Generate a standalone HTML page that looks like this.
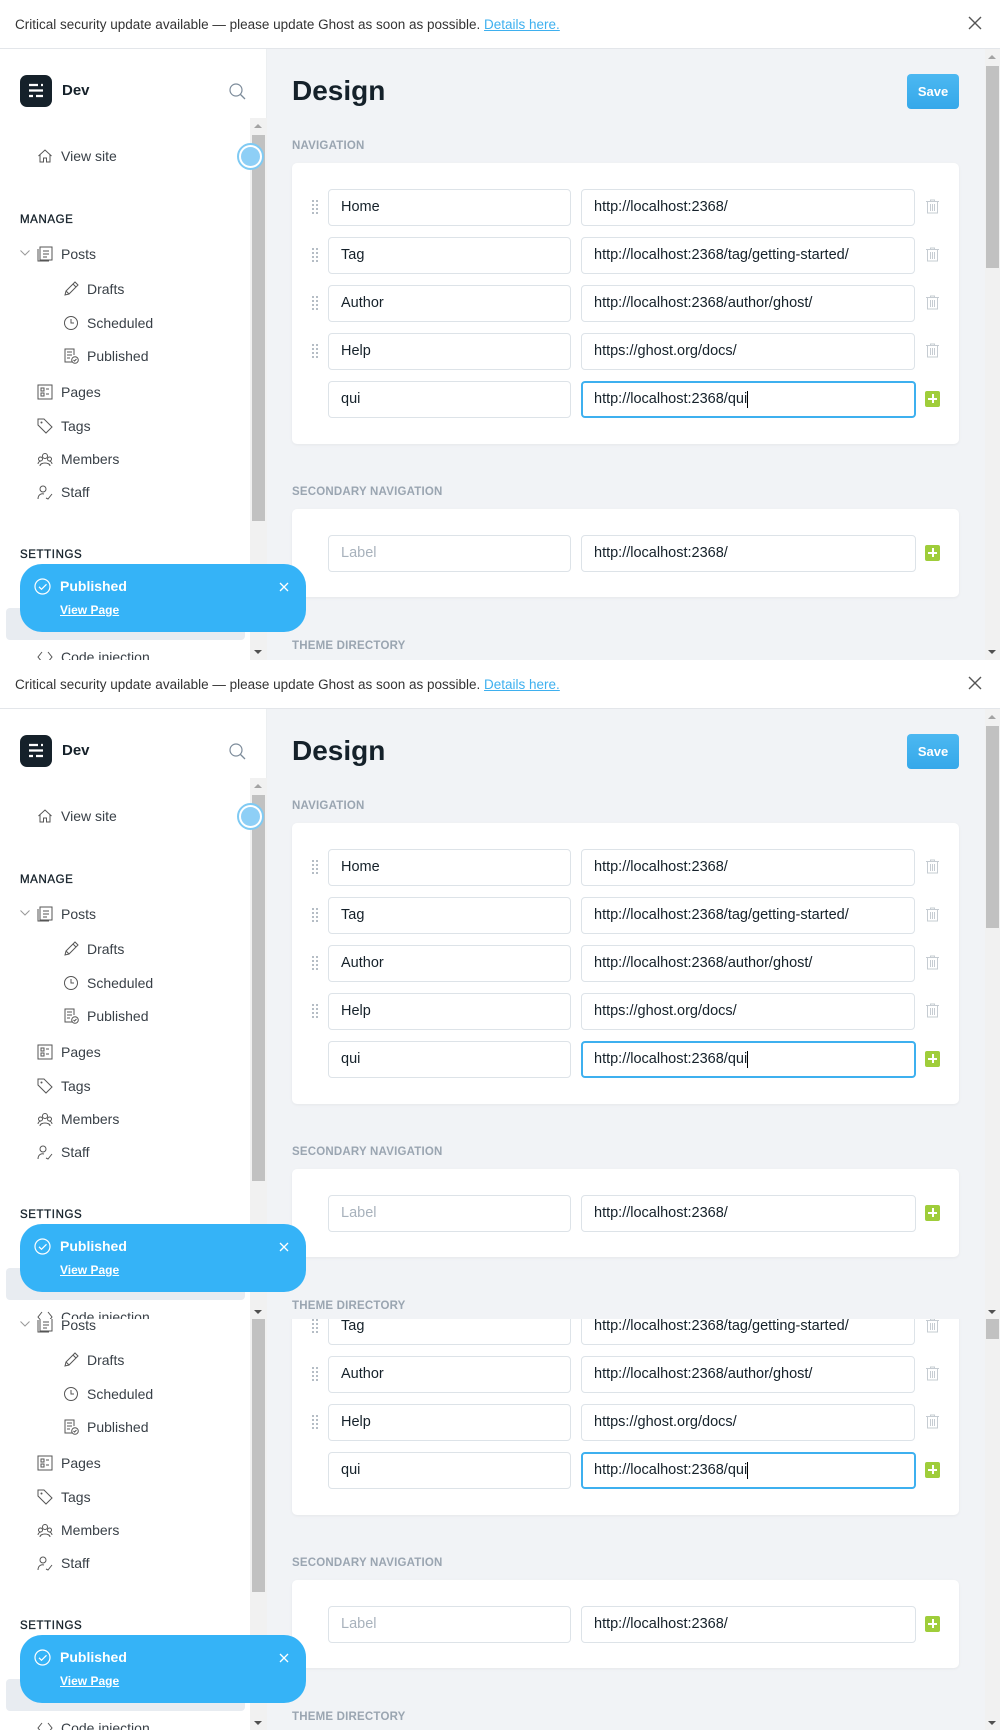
<!DOCTYPE html>
<html><head><meta charset="utf-8">
<style>
*{box-sizing:border-box;margin:0;padding:0}
body{width:1000px;height:1730px;position:relative;overflow:hidden;background:#fff;font-family:"Liberation Sans",sans-serif;color:#15212a}
.blk{position:absolute;left:0;width:1000px;height:660px;overflow:hidden;background:#fff}
.a{position:absolute}
.banner{left:0;top:0;width:1000px;height:49px;border-bottom:1px solid #e3e6ea;background:#fff;font-size:13.5px;color:#333;line-height:49px;padding-left:15px}
.banner a{color:#3eb0ef;text-decoration:underline}
.side{left:0;top:49px;width:267px;height:611px;background:#fff;border-right:1px solid #eceff1}
.main{left:267px;top:49px;width:733px;height:611px;background:#f1f3f6}
.ni{position:absolute;font-size:14px;color:#394047;line-height:20px}
.ni svg{position:absolute;top:2px}
.lbl{position:absolute;font-size:11.5px;font-weight:normal;letter-spacing:.6px;color:#15212a;-webkit-text-stroke:.3px #15212a}
.sec{position:absolute;left:292px;font-size:11.5px;font-weight:bold;color:#9aa5b1;letter-spacing:.2px}
.card{position:absolute;left:292px;width:667px;background:#fff;border-radius:5px;box-shadow:0 1px 3px rgba(0,0,0,.05)}
.in{position:absolute;height:37px;border:1px solid #dde3e8;border-radius:4px;background:#fff;font-size:14.5px;line-height:35px;padding-left:12px;color:#15212a;white-space:nowrap}
.drag{position:absolute;left:311px;width:8px;height:16px}
.trash{position:absolute;left:926px}
.plus{position:absolute;left:925px;width:15px;height:16px;background:#9fcd3a;border-radius:2px}
.plus:before{content:"";position:absolute;left:3px;top:7px;width:9px;height:1.5px;background:#fff}
.plus:after{content:"";position:absolute;left:7px;top:3px;width:1.5px;height:9px;background:#fff}
</style></head><body>

<template id="t">
<div class="a banner">Critical security update available — please update Ghost as soon as possible. <a>Details here.</a></div>
<svg class="a" style="left:968px;top:16px" width="14" height="14" viewBox="0 0 14 14"><path d="M1 1L13 13M13 1L1 13" stroke="#555" stroke-width="1.4"/></svg>
<div class="a side">
 <div class="a" style="left:20px;top:26px;width:32px;height:32px;background:#15212a;border-radius:7px">
  <svg width="32" height="32" viewBox="0 0 32 32"><path d="M9 10h9M21 10h2M9 15.5h14M9 21h4M16 21h7" stroke="#fff" stroke-width="2.2"/></svg></div>
 <div class="a" style="left:62px;top:33px;font-size:15px;font-weight:bold">Dev</div>
 <svg class="a" style="left:229px;top:34px" width="17" height="17" viewBox="0 0 17 17"><circle cx="7" cy="7" r="6" fill="none" stroke="#7c8b9a" stroke-width="1.2"/><path d="M11.5 11.5L16 16" stroke="#7c8b9a" stroke-width="1.3"/></svg>
 <div class="a" style="left:250px;top:69px;width:17px;height:542px;background:#f1f1f1"></div>
 <div class="a" style="left:252px;top:86px;width:13px;height:386px;background:#c1c1c1"></div>
 <div class="a" style="left:254px;top:75px;border:4px solid transparent;border-bottom:4px solid #a3a3a3;border-top:0"></div>
 <div class="a" style="left:254px;top:601px;border:4px solid transparent;border-top:4px solid #505050;border-bottom:0"></div>
 <div class="a" style="left:237px;top:94px;width:27px;height:27px;border-radius:50%;border:2px solid #7fcaf3;background:#fff"></div>
 <div class="a" style="left:241px;top:98px;width:19px;height:19px;border-radius:50%;background:#8ecff6"></div>
 <div class="ni" style="left:37px;top:97px"><svg width="16" height="16" viewBox="0 0 16 16" style="left:0"><path d="M1.5 8L8 2l6.5 6M3 7v7h3.5v-4h3v4H13V7" fill="none" stroke="#555" stroke-width="1"/></svg><span style="margin-left:24px">View site</span></div>
 <div class="lbl" style="left:20px;top:165px">MANAGE</div>
 <svg class="a" style="left:20px;top:201px" width="10" height="6"><path d="M.5.5L5 5 9.5.5" fill="none" stroke="#999"/></svg>
 <div class="ni" style="left:37px;top:195px"><svg width="16" height="16" viewBox="0 0 16 16" style="left:0"><rect x="3" y="1" width="12" height="13" fill="none" stroke="#555"/><path d="M1 3v12h11M6 5h6M6 8h6M6 11h4" fill="none" stroke="#555"/></svg><span style="margin-left:24px">Posts</span></div>
 <div class="ni" style="left:63px;top:230px"><svg width="16" height="16" viewBox="0 0 16 16" style="left:0"><path d="M2 14l1-4 9-9 3 3-9 9zM3 10l3 3M10 3l3 3" fill="none" stroke="#555"/></svg><span style="margin-left:24px">Drafts</span></div>
 <div class="ni" style="left:63px;top:264px"><svg width="16" height="16" viewBox="0 0 16 16" style="left:0"><circle cx="8" cy="8" r="6.5" fill="none" stroke="#555"/><path d="M8 4v4h3" fill="none" stroke="#555"/></svg><span style="margin-left:24px">Scheduled</span></div>
 <div class="ni" style="left:63px;top:297px"><svg width="16" height="16" viewBox="0 0 16 16" style="left:0"><path d="M9 14H2V1h9v6M4 4h5M4 7h5M4 10h3" fill="none" stroke="#555"/><circle cx="12" cy="12" r="3.3" fill="none" stroke="#555"/><path d="M10.5 12l1 1 2-2" fill="none" stroke="#555"/></svg><span style="margin-left:24px">Published</span></div>
 <div class="ni" style="left:37px;top:333px"><svg width="16" height="16" viewBox="0 0 16 16" style="left:0"><rect x="1" y="1" width="14" height="14" fill="none" stroke="#555"/><path d="M4 4h3v3H4zM4 9h3v3H4zM9 5h3M9 10h3" fill="none" stroke="#555"/></svg><span style="margin-left:24px">Pages</span></div>
 <div class="ni" style="left:37px;top:367px"><svg width="16" height="16" viewBox="0 0 16 16" style="left:0"><path d="M1 1h6l8 8-6 6-8-8z" fill="none" stroke="#555"/><circle cx="4.5" cy="4.5" r="1" fill="#555"/></svg><span style="margin-left:24px">Tags</span></div>
 <div class="ni" style="left:37px;top:400px"><svg width="16" height="16" viewBox="0 0 16 16" style="left:0"><circle cx="8" cy="5" r="2.5" fill="none" stroke="#555"/><circle cx="3.5" cy="8" r="2" fill="none" stroke="#555"/><circle cx="12.5" cy="8" r="2" fill="none" stroke="#555"/><path d="M3 15c0-4 10-4 10 0M1 13c0-2 2-3 3-3M15 13c0-2-2-3-3-3" fill="none" stroke="#555"/></svg><span style="margin-left:24px">Members</span></div>
 <div class="ni" style="left:37px;top:433px"><svg width="16" height="16" viewBox="0 0 16 16" style="left:0"><circle cx="6" cy="5" r="3" fill="none" stroke="#555"/><path d="M1 15c0-4 3-6 6-5M9 14l2 1 4-5" fill="none" stroke="#555"/></svg><span style="margin-left:24px">Staff</span></div>
 <div class="lbl" style="left:20px;top:500px">SETTINGS</div>
 <div class="a" style="left:6px;top:559px;width:239px;height:32px;background:#e8ecf1;border-radius:4px"></div>
 <div class="ni" style="left:37px;top:598px"><svg width="16" height="16" viewBox="0 0 16 16" style="left:0"><path d="M5 3L1 8l4 5M11 3l4 5-4 5" fill="none" stroke="#555"/></svg><span style="margin-left:24px">Code injection</span></div>
</div>
<div class="a main">
 <div class="a" style="left:718px;top:0;width:15px;height:611px;background:#f1f1f1"></div>
 <div class="a" style="left:719px;top:17px;width:13px;height:202px;background:#c1c1c1"></div>
 <div class="a" style="left:721px;top:6px;border:4px solid transparent;border-bottom:4px solid #a3a3a3;border-top:0"></div>
 <div class="a" style="left:721px;top:601px;border:4px solid transparent;border-top:4px solid #505050;border-bottom:0"></div>
</div>
<div class="a" style="left:292px;top:74px;font-size:28px;font-weight:bold;color:#15212a;line-height:34px">Design</div>
<div class="a" style="left:907px;top:74px;width:52px;height:35px;border-radius:4px;background:linear-gradient(#4cb8f1,#35a8ea);color:#fff;font-size:13px;font-weight:bold;text-align:center;line-height:35px">Save</div>
<div class="sec" style="top:140px">NAVIGATION</div>
<div class="card" style="top:163px;height:281px"></div>
<div class="in" style="left:328px;top:189px;width:243px">Home</div><div class="in" style="left:581px;top:189px;width:334px">http://localhost:2368/</div>
<div class="in" style="left:328px;top:237px;width:243px">Tag</div><div class="in" style="left:581px;top:237px;width:334px">http://localhost:2368/tag/getting-started/</div>
<div class="in" style="left:328px;top:285px;width:243px">Author</div><div class="in" style="left:581px;top:285px;width:334px">http://localhost:2368/author/ghost/</div>
<div class="in" style="left:328px;top:333px;width:243px">Help</div><div class="in" style="left:581px;top:333px;width:334px">https://ghost.org/docs/</div>
<div class="in" style="left:328px;top:381px;width:243px">qui</div><div class="in" style="left:581px;top:381px;width:335px;border:2px solid #3eb0ef;line-height:33px;padding-left:11px">http://localhost:2368/qui<span style="display:inline-block;width:1px;height:17px;background:#000;vertical-align:middle"></span></div>
<div class="plus" style="top:391px"></div>
<div class="sec" style="top:486px">SECONDARY NAVIGATION</div>
<div class="card" style="top:509px;height:88px"></div>
<div class="in" style="left:328px;top:535px;width:243px;color:#a8b2bc">Label</div><div class="in" style="left:581px;top:535px;width:335px">http://localhost:2368/</div>
<div class="plus" style="top:545px"></div>
<div class="sec" style="top:640px">THEME DIRECTORY</div>
<div class="a" style="left:20px;top:564px;width:286px;height:68px;border-radius:22px;background:#35b3f7;color:#fff">
 <svg class="a" style="left:14px;top:14px" width="17" height="17" viewBox="0 0 17 17"><circle cx="8.5" cy="8.5" r="7.5" fill="none" stroke="#fff" stroke-width="1.2"/><path d="M5 8.8l2.5 2.5 5-5" fill="none" stroke="#fff" stroke-width="1.2"/></svg>
 <div class="a" style="left:40px;top:14px;font-size:14px;font-weight:bold">Published</div>
 <div class="a" style="left:40px;top:39px;font-size:12px;font-weight:bold;text-decoration:underline">View Page</div>
 <svg class="a" style="left:259px;top:18px" width="10" height="10"><path d="M1 1l8 8M9 1L1 9" stroke="#fff" stroke-width="1.3"/></svg>
</div>
</template>

<div class="blk" id="b1" style="top:0"></div>
<div class="blk" id="b2" style="top:660px"></div>
<div class="a" style="left:0;top:1319px;width:1000px;height:411px;overflow:hidden">
 <div class="blk" id="b3" style="top:-248px"></div>
</div>
<script>
var t=document.getElementById('t').innerHTML;
['b1','b2','b3'].forEach(function(id){document.getElementById(id).innerHTML=t;});
var rows=[207,255,303,351];
['b1','b2','b3'].forEach(function(id){
 var b=document.getElementById(id),h='';
 rows.forEach(function(y){
  h+='<svg class="drag" style="top:'+(y-8)+'px" width="8" height="16"><g fill="#b5bdc5">'+
  [2,6,10,14].map(function(yy){return '<rect x="1" y="'+(yy-1)+'" width="2" height="2"/><rect x="5" y="'+(yy-1)+'" width="2" height="2"/>';}).join('')+'</g></svg>';
  h+='<svg class="trash" style="top:'+(y-8)+'px" width="13" height="15" viewBox="0 0 13 15"><path d="M0 2.5h13M4.5 2.5V1h4v1.5M1.5 2.5V14h10V2.5M4.5 5v7M6.5 5v7M8.5 5v7" fill="none" stroke="#c6ccd2"/></svg>';
 });
 b.insertAdjacentHTML('beforeend',h);
});
</script>
</body></html>
